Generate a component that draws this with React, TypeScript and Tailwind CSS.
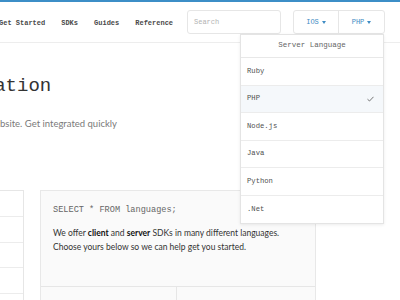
import React from "react";

const languages = ["Ruby", "PHP", "Node.js", "Java", "Python", ".Net"];

function Caret() {
  return (
    <svg width="4" height="3" viewBox="0 0 4 3" className="ml-[3px] inline-block">
      <path d="M0 0 L4 0 L2 3 Z" fill="currentColor" />
    </svg>
  );
}

export default function App() {
  const selected = "PHP";

  return (
    <div className="w-[400px] h-[300px] overflow-hidden bg-white relative font-['Liberation_Mono',monospace]">
      <div className="h-[2px] bg-[#3c8ec7]" />
      <header className="h-[41px] border-b border-[#ededed] flex items-center pr-[15px]">
        <nav className="flex gap-4 -ml-[1px] pt-[2px] text-[7px] font-bold text-[#4a4a4a]">
          <span>Get Started</span>
          <span>SDKs</span>
          <span>Guides</span>
          <span>Reference</span>
        </nav>
        <div className="ml-auto flex items-center gap-3">
          <div className="w-[94px] h-[24px] border border-[#e6e6e6] rounded-[3px] flex items-center px-[6px] text-[7px] text-[#b3b3b3]">
            Search
          </div>
          <div className="relative flex h-[24px] border border-[#e6e6e6] rounded-[3px] text-[7px] text-[#3f8cc4]">
            <button className="w-[45px] flex items-center justify-center border-r border-[#e6e6e6]">
              IOS
              <Caret />
            </button>
            <button className="w-[45px] flex items-center justify-center">
              PHP
              <Caret />
            </button>
            <div className="absolute top-[23px] right-0 w-[144px] bg-white border border-[#e4e4e4] shadow-[0_1px_3px_rgba(0,0,0,0.08)] z-10">
              <div className="h-[23px] flex items-center justify-center text-[7.5px] text-[#666] border-b border-[#e8e8e8]">
                Server Language
              </div>
              {languages.map((lang, i) => (
                <div
                  key={lang}
                  className={
                    "h-[27.5px] flex items-center justify-between pl-[6px] pr-[9px] text-[7.2px] text-[#4f4f4f] " +
                    (i < languages.length - 1 ? "border-b border-[#ececec] " : "") +
                    (lang === selected ? "bg-[#f5f8fb]" : "")
                  }
                >
                  <span>{lang}</span>
                  {lang === selected && (
                    <svg width="7" height="6" viewBox="0 0 7 6">
                      <path d="M0.5 3.2 L2.5 5 L6.5 0.8" fill="none" stroke="#666" strokeWidth="0.9" />
                    </svg>
                  )}
                </div>
              ))}
            </div>
          </div>
        </div>
      </header>

      <main className="pt-[34px]">
        <h1 className="-ml-[97px] text-[19px] leading-[19px] text-[#333] whitespace-nowrap">
          Documentation
        </h1>
        <p className="mt-[21px] flex whitespace-nowrap text-[9.5px] leading-[14px] text-[#7a7a7a] font-['Lato',sans-serif]">
          <span className="w-0 flex justify-end">Welcome to the documentation for our we</span>
          <span>bsite. Get integrated quickly</span>
        </p>

        <section className="mt-[59px] flex gap-4">
          <div className="-ml-[1px] w-[25px] border border-[#e6e6e6] bg-white">
            <div className="h-[26px] border-b border-[#ececec]" />
            <div className="h-[25.5px] border-b border-[#ececec]" />
            <div className="h-[25.5px] border-b border-[#ececec]" />
            <div className="h-[25.5px] border-b border-[#ececec]" />
            <div className="h-[25.5px]" />
          </div>
          <div className="w-[276px] border border-[#e8e8e8] bg-[#fafafa]">
            <div className="h-[96px] px-[12px] pt-[13px] border-b border-[#e6e6e6]">
              <div className="text-[8.6px] leading-[12px] text-[#666]">SELECT * FROM languages;</div>
              <div className="mt-[10px] text-[8.5px] leading-[14px] text-[#333] font-['Lato',sans-serif]">
                <p>
                  We offer <b className="text-[#111]">client</b> and <b className="text-[#111]">server</b> SDKs in many different languages.
                </p>
                <p>Choose yours below so we can help get you started.</p>
              </div>
            </div>
            <div className="flex h-[40px]">
              <div className="w-[136px] border-r border-[#e6e6e6]" />
              <div className="flex-1" />
            </div>
          </div>
        </section>
      </main>
    </div>
  );
}
